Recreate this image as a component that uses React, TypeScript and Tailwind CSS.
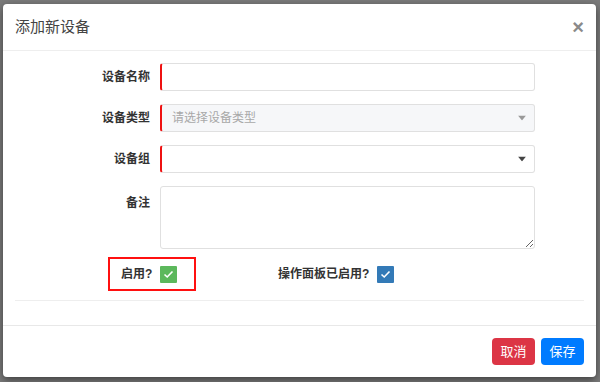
import React from "react";

const font = { fontFamily: '"Liberation Sans", "Noto Sans CJK SC", sans-serif' };

function Caret({ color }: { color: string }) {
  return (
    <svg width="8" height="5" viewBox="0 0 8 5" className="absolute right-[8px] top-1/2 -translate-y-1/2">
      <path d="M0 0 L8 0 L4 5 Z" fill={color} />
    </svg>
  );
}

function Check({ bg }: { bg: string }) {
  return (
    <span className={`flex h-[17px] w-[17px] items-center justify-center rounded-[1px] ${bg}`}>
      <svg width="11" height="9" viewBox="0 0 11 9">
        <path d="M1.5 4.5 L4.2 7 L9.5 1.5" fill="none" stroke="white" strokeWidth="1.6" />
      </svg>
    </span>
  );
}

function Row({ label, children, top }: { label: string; children: React.ReactNode; top?: boolean }) {
  return (
    <div className={`flex ${top ? "items-start" : "items-center"} mb-[13px]`}>
      <label className={`w-[147px] text-right text-[12px] font-bold text-[#333] ${top ? "pt-[8px]" : ""}`}>
        {label}
      </label>
      <div className="ml-[10px] w-[375px]">{children}</div>
    </div>
  );
}

export default function App() {
  return (
    <div className="h-[382px] w-[600px] overflow-hidden bg-[#7b7b7b] pl-[3px] pt-[4px]" style={font}>
      <div className="w-[593px] rounded-[4px] bg-white shadow-[0_3px_9px_rgba(0,0,0,0.5)]">
        <header className="flex h-[47px] items-center justify-between border-b border-[#eeeeee] pl-[12px] pr-[12px]">
          <h4 className="text-[15px] text-[#444]">添加新设备</h4>
          <button className="text-[20px] font-bold leading-none text-[#8a8a8a]">×</button>
        </header>

        <div className="pb-[24px] pt-[12px]">
          <Row label="设备名称">
            <input className="block h-[28px] w-full rounded-[3px] border border-[#e0e0e0] border-l-2 border-l-[#ee1111] bg-white px-2 text-[12px] outline-none" />
          </Row>
          <Row label="设备类型">
            <div className="relative flex h-[28px] w-full items-center rounded-[3px] border border-[#e0e0e0] border-l-2 border-l-[#ee1111] bg-[#f6f7f9] pl-[10px] text-[12px] text-[#a8a8a8]">
              请选择设备类型
              <Caret color="#999" />
            </div>
          </Row>
          <Row label="设备组">
            <div className="relative h-[28px] w-full rounded-[3px] border border-[#e0e0e0] border-l-2 border-l-[#ee1111] bg-white">
              <Caret color="#444" />
            </div>
          </Row>
          <Row label="备注" top>
            <textarea className="block h-[63px] w-full rounded-[3px] border border-[#e0e0e0] bg-white px-2 text-[12px] outline-none" />
          </Row>

          <div className="-mt-[5px] flex items-center">
            <div className="w-[105px]" />
            <div className="flex h-[34px] w-[88px] items-center gap-[8px] border-2 border-[#ff1010] pl-[11px]">
              <span className="text-[12px] font-bold text-[#333]">启用?</span>
              <Check bg="bg-[#5cb85c]" />
            </div>
            <div className="ml-[82px] flex items-center gap-[8px]">
              <span className="text-[12px] font-bold text-[#333]">操作面板已启用?</span>
              <Check bg="bg-[#337ab7]" />
            </div>
          </div>

          <div className="mx-[12px] mt-[9px] border-t border-[#eeeeee]" />
        </div>

        <footer className="flex justify-end gap-[6px] border-t border-[#e8e8e8] px-[12px] pb-[12px] pt-[12px]">
          <button className="h-[27px] w-[43px] rounded-[4px] bg-[#dc3545] text-[13px] text-white">取消</button>
          <button className="h-[27px] w-[43px] rounded-[4px] bg-[#007bff] text-[13px] text-white">保存</button>
        </footer>
      </div>
    </div>
  );
}
